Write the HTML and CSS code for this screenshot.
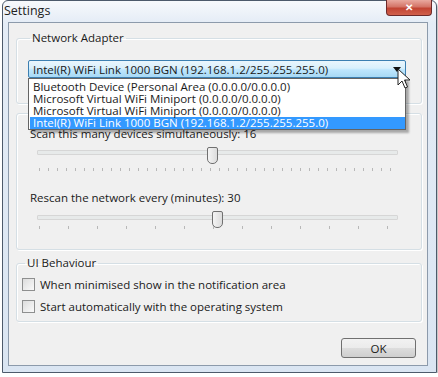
FILE: index.html
```html
<!DOCTYPE html>
<html lang="en">
<head>
    <meta charset="UTF-8">
    <title>Settings</title>
    <link rel="stylesheet" href="styles.css">
</head>
<body>

    <div class="window">
        <div class="titlebar">
            <span class="title">Settings</span>
            <div class="close-btn">&#x2715;</div>
        </div>

        <div class="client">
            <!-- Network adapter -->
            <fieldset class="group group-adapter">
                <legend>Network Adapter</legend>
                <div class="combo">
                    <span class="combo-text">Intel(R) WiFi Link 1000 BGN (192.168.1.2/255.255.255.0)</span>
                    <span class="combo-arrow"></span>
                </div>
            </fieldset>

            <!-- Scanning -->
            <fieldset class="group group-scan">
                <legend>Scanning</legend>
                <div class="slider-label">Scan this many devices simultaneously: 16</div>
                <div class="slider slider-devices">
                    <div class="track"></div>
                    <div class="thumb" style="left: 170px;"></div>
                    <div class="ticks"></div>
                </div>

                <div class="slider-label">Rescan the network every (minutes): 30</div>
                <div class="slider slider-rescan">
                    <div class="track"></div>
                    <div class="thumb" style="left: 175px;"></div>
                    <div class="ticks"></div>
                </div>
            </fieldset>

            <!-- UI behaviour -->
            <fieldset class="group group-ui">
                <legend>UI Behaviour</legend>
                <label class="check"><span class="box"></span>When minimised show in the notification area</label>
                <label class="check"><span class="box"></span>Start automatically with the operating system</label>
            </fieldset>

            <div class="buttons">
                <button class="btn-ok">OK</button>
            </div>

            <!-- open drop down list -->
            <ul class="dropdown">
                <li>Bluetooth Device (Personal Area (0.0.0.0/0.0.0.0)</li>
                <li>Microsoft Virtual WiFi Miniport (0.0.0.0/0.0.0.0)</li>
                <li>Microsoft Virtual WiFi Miniport (0.0.0.0/0.0.0.0)</li>
                <li class="selected">Intel(R) WiFi Link 1000 BGN (192.168.1.2/255.255.255.0)</li>
            </ul>

            <svg class="cursor" width="14" height="22" viewBox="0 0 14 22">
                <path d="M1 1 L1 17 L5 13 L8 20 L10.5 19 L7.5 12 L13 12 Z" fill="#fff" stroke="#222" stroke-width="1"/>
            </svg>
        </div>
    </div>

</body>
</html>
```

FILE: styles.css
```css
body {
    margin: 0 0 0 2px;
    background: #ffffff;
    font-family: "Open Sans", "Noto Sans", sans-serif;
    font-size: 11.5px;
    color: #1a1a1a;
}
.window {
    width: 435px;
    height: 373px;
    box-sizing: border-box;
    border: 1px solid #4d5a6b;
    border-radius: 6px 6px 0 0;
    background: linear-gradient(to bottom, #f7f9fc 0, #e4ecf6 22px, #dae5f2 100%);
    box-shadow: 1px 2px 2px rgba(0, 0, 0, 0.3);
    display: flex;
    flex-direction: column;
    padding: 0 8px 6px 5px;
}
.titlebar {
    height: 21px;
    display: flex;
    justify-content: space-between;
    align-items: flex-start;
    flex-shrink: 0;
}
.title {
    font-size: 12.5px;
    color: #222;
    padding-top: 1px;
    margin-left: -4px;
}
.close-btn {
    width: 44px;
    height: 15px;
    margin-right: -4px;
    margin-top: -1px;
    border: 1px solid #6d2a2a;
    border-top: none;
    border-radius: 0 0 4px 4px;
    background: linear-gradient(to bottom, #e9a99f 0, #d47467 45%, #c24433 55%, #d0604c 100%);
    color: #fff;
    font-size: 10px;
    font-weight: bold;
    text-align: center;
    line-height: 15px;
}
.client {
    flex: 1;
    position: relative;
    background: #f0f0f0;
    border: 1px solid #8c9aab;
    padding: 7px 5px 0 7px;
}
.group {
    box-sizing: border-box;
    border: 1px solid #d5dfe5;
    border-radius: 3px;
    box-shadow: inset 1px 1px 0 #fff, 1px 1px 0 #fff;
    margin: 0;
    padding: 0 10px;
}
.group legend {
    padding: 0 2px;
    margin-left: 3px;
    line-height: 16px;
}
.group-adapter {
    height: 74px;
    padding: 14px 15px 0 10px;
}
.combo {
    height: 18px;
    box-sizing: border-box;
    margin-left: 1px;
    border: 1px solid #3c7fb1;
    border-radius: 2px;
    background: linear-gradient(to bottom, #eaf6fd 0, #d9f0fc 45%, #bee6fd 55%, #a7d9f5 100%);
    display: flex;
    align-items: center;
    justify-content: space-between;
    padding: 0 4px 0 4px;
}
.combo-arrow {
    width: 0;
    height: 0;
    border-left: 4px solid transparent;
    border-right: 4px solid transparent;
    border-top: 5px solid #111;
}
.group-scan {
    margin-top: 1px;
    height: 145px;
    padding-top: 5px;
}
.slider-label {
    margin-left: 3px;
    height: 16px;
    line-height: 16px;
}
.slider {
    position: relative;
    margin: 0 13px 0 10px;
}
.track {
    position: absolute;
    left: 0;
    right: 0;
    height: 3px;
    border: 1px solid #d6d6d6;
    border-radius: 1px;
    background: #e7eaea;
}
.thumb {
    position: absolute;
    width: 9px;
    height: 15px;
    border: 1px solid #707070;
    border-radius: 2px 2px 5px 5px;
    background: linear-gradient(to right, #f4f4f4, #dcdcdc);
}
.ticks {
    position: absolute;
    left: 2px;
    right: 2px;
    height: 3px;
}
.slider-devices {
    height: 48px;
}
.slider-devices .track {
    top: 8px;
}
.slider-devices .thumb {
    top: 5px;
}
.slider-devices .ticks {
    top: 26px;
    background: repeating-linear-gradient(to right, #b8b8b8 0, #b8b8b8 1px, transparent 1px, transparent 9px);
}
.slider-rescan {
    height: 30px;
}
.slider-rescan .track {
    top: 9px;
}
.slider-rescan .thumb {
    top: 5px;
}
.slider-rescan .ticks {
    top: 20px;
    background: repeating-linear-gradient(to right, #b8b8b8 0, #b8b8b8 1px, transparent 1px, transparent 29px);
}
.group-ui {
    margin-top: 5px;
    height: 67px;
    padding: 2px 6px 0 5px;
}
.check {
    display: flex;
    align-items: center;
    height: 22px;
}
.box {
    width: 11px;
    height: 11px;
    border: 1px solid #8e8f8f;
    background: linear-gradient(135deg, #dcdcdc, #fafafa);
    margin-right: 5px;
}
.buttons {
    display: flex;
    justify-content: flex-end;
    padding: 16px 6px 0 0;
}
.btn-ok {
    width: 75px;
    height: 20px;
    border: 1px solid #707070;
    border-radius: 3px;
    background: linear-gradient(to bottom, #f2f2f2 0, #ebebeb 50%, #dddddd 50%, #cfcfcf 100%);
    font-family: inherit;
    font-size: 11.5px;
    color: #1a1a1a;
    padding: 0;
}
.dropdown {
    position: absolute;
    top: 55px;
    left: 19px;
    width: 375px;
    margin: 0;
    padding: 2px 0 0 1px;
    list-style: none;
    background: #fff;
    border: 1px solid #646464;
    box-shadow: 3px 3px 2px rgba(0, 0, 0, 0.3);
}
.dropdown li {
    height: 12px;
    line-height: 12px;
    padding-left: 3px;
}
.dropdown li.selected {
    background: #3399ff;
    color: #fff;
}
.cursor {
    position: absolute;
    top: 45px;
    left: 388px;
}
```
